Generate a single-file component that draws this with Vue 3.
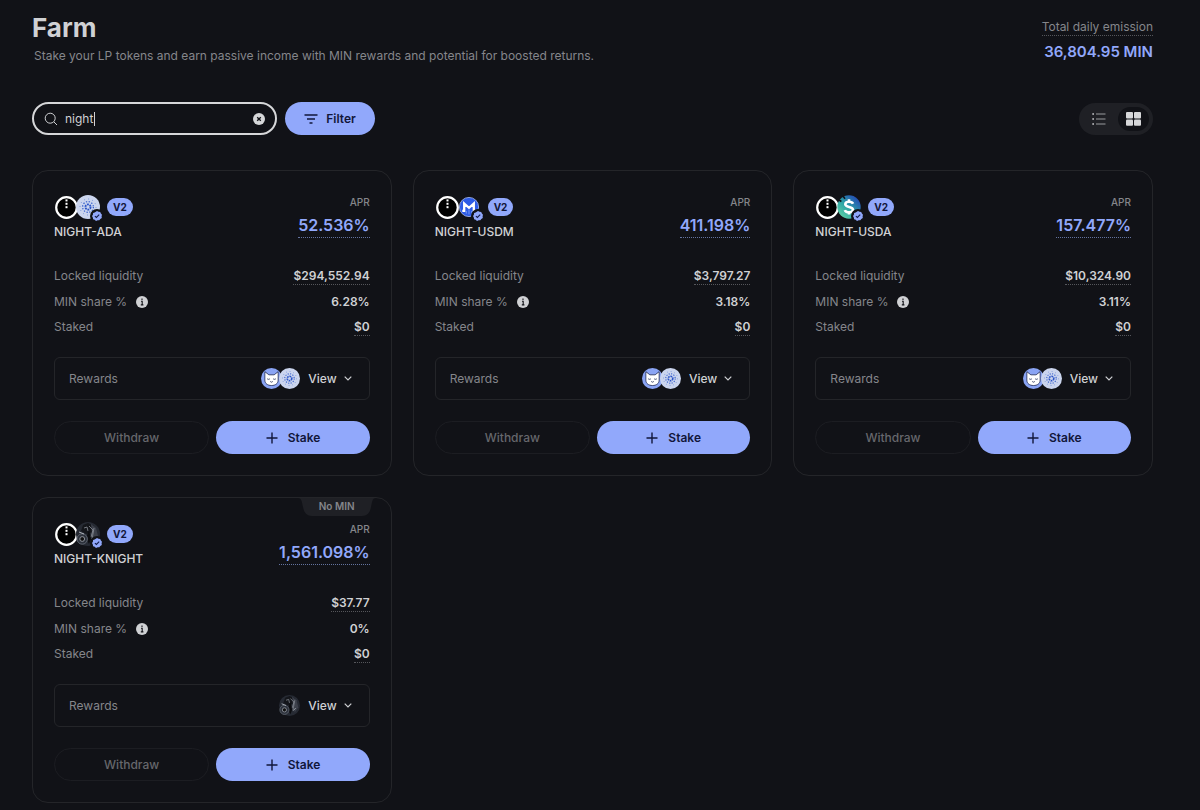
<template>
  <main class="farm-page">
    <!-- Page heading -->
    <header class="page-header">
      <div>
        <h1>Farm</h1>
        <p class="subtitle">
          Stake your LP tokens and earn passive income with MIN rewards and potential for boosted returns.
        </p>
      </div>
      <div class="emission">
        <span class="emission-label">Total daily emission</span>
        <strong>36,804.95 MIN</strong>
      </div>
    </header>

    <!-- Search, filter and view switch -->
    <div class="toolbar">
      <div class="search-box">
        <svg class="search-icon" viewBox="0 0 14 14" aria-hidden="true">
          <circle cx="6.2" cy="6.2" r="5" />
          <path d="M9.9 9.9L13 13" />
        </svg>
        <div class="search-field">
          <input v-model="search" type="text" aria-label="Search farms" />
          <span v-if="search === 'night'" class="caret"></span>
        </div>
        <button class="clear-button" aria-label="Clear search" @click="search = ''">
          <svg viewBox="0 0 12 12">
            <circle cx="6" cy="6" r="6" />
            <path d="M4.2 4.2L7.8 7.8M7.8 4.2L4.2 7.8" />
          </svg>
        </button>
      </div>

      <button class="filter-button">
        <svg viewBox="0 0 14 10" aria-hidden="true">
          <path d="M0.5 1H13.5M3 5H11M5.5 9H8.5" />
        </svg>
        Filter
      </button>

      <div class="view-switch">
        <button :class="{ active: view === 'list' }" aria-label="List view" @click="view = 'list'">
          <svg class="list-icon" viewBox="0 0 14 12">
            <path d="M4 1H13.5M4 6H13.5M4 11H13.5" />
            <path class="dots" d="M0.3 1H2M0.3 6H2M0.3 11H2" />
          </svg>
        </button>
        <button :class="{ active: view === 'grid' }" aria-label="Grid view" @click="view = 'grid'">
          <svg class="grid-icon" viewBox="0 0 15 14">
            <rect x="0" y="0" width="7" height="6.4" rx="1" />
            <rect x="8" y="0" width="7" height="6.4" rx="1" />
            <rect x="0" y="7.4" width="7" height="6.4" rx="1" />
            <rect x="8" y="7.4" width="7" height="6.4" rx="1" />
          </svg>
        </button>
      </div>
    </div>

    <!-- Shared token logos -->
    <svg class="symbols" aria-hidden="true">
      <defs>
        <linearGradient id="usda-fill" x1="0.1" y1="0.9" x2="0.8" y2="0.1">
          <stop offset="0" stop-color="#5fd0a5" />
          <stop offset="0.5" stop-color="#2ba3a6" />
          <stop offset="1" stop-color="#2450b4" />
        </linearGradient>
      </defs>
      <symbol id="token-night" viewBox="0 0 24 24">
        <circle cx="12.5" cy="12.5" r="10.3" fill="#000" stroke="#fff" stroke-width="2.2" />
        <g fill="#fff">
          <rect x="11.5" y="4.4" width="2" height="2" />
          <rect x="11.5" y="7.8" width="2" height="2" />
          <rect x="11.5" y="11.2" width="2" height="2" />
        </g>
      </symbol>
      <symbol id="token-ada" viewBox="0 0 24 24">
        <circle cx="12" cy="12" r="12" fill="#cbd5ee" />
        <circle cx="12" cy="12" r="2.6" fill="none" stroke="#2c55c8" stroke-width="1.9" stroke-dasharray="1.9 0.82" />
        <circle cx="12" cy="12" r="5.4" fill="none" stroke="#3a62cd" stroke-width="1.3" stroke-dasharray="1.3 1.53" />
        <circle cx="12" cy="12" r="8" fill="none" stroke="#5f80d6" stroke-width="0.9" stroke-dasharray="0.9 3.29" />
      </symbol>
      <symbol id="token-usdm" viewBox="0 0 24 24">
        <circle cx="12" cy="12" r="9.6" fill="#2d5be6" stroke="#a9bdf5" stroke-width="0.8" />
        <path d="M5.3 15.8H7.2V8.6L12 12.8L16.8 8.6V15.8H18.9" fill="none" stroke="#fff" stroke-width="2.3" />
        <path d="M12 14.5V19.4M9.3 16V18.6M14.7 16V18.6" stroke="#8ca8f5" stroke-width="0.8" />
      </symbol>
      <symbol id="token-usda" viewBox="0 0 24 24">
        <circle cx="12" cy="12" r="11.7" fill="url(#usda-fill)" />
        <path d="M6 1L8 3.8M2 5L4.4 6.5" stroke="#111217" stroke-width="1.6" />
        <path
          d="M16 8.7C15.4 7.2 13.8 6.7 12 6.7C9.8 6.7 8.3 7.7 8.3 9.3C8.3 12.8 16 11 16 14.7C16 16.4 14.3 17.3 12 17.3C9.8 17.3 8.3 16.6 7.8 15.1M12 4.3V6.8M12 17.2V19.6"
          fill="none"
          stroke="#fff"
          stroke-width="2.6"
        />
      </symbol>
      <symbol id="token-knight" viewBox="0 0 24 24">
        <circle cx="12" cy="12" r="12" fill="#262a33" />
        <path d="M7 3L12 1L18 4L17 10L10 12L5 9Z" fill="#14161b" />
        <path d="M15 2L20 6L22 14L18 20L16 11Z" fill="#3d414b" />
        <path d="M8 6L11 5L12 9M13 4L17 8L15 15M18 6L16 17" fill="none" stroke="#8d929b" stroke-width="0.8" />
        <path d="M13 8L15 17L13 22L10 16Z" fill="#0c0d10" />
        <circle cx="6.2" cy="17" r="5.2" fill="#2c313b" stroke="#5d636e" stroke-width="1" />
        <circle cx="6.2" cy="17" r="2.4" fill="#111" stroke="#989da6" stroke-width="0.9" />
        <path d="M3 10L8 12M16 18L19 15" stroke="#aeb3bb" stroke-width="1" />
      </symbol>
      <symbol id="token-min" viewBox="0 0 24 24">
        <circle cx="12" cy="12" r="12" fill="#8aa4f4" />
        <path
          d="M4.4 4.2L9 7.8H15L19.6 4.2V13.8C19.6 17.8 16.4 20 12 20C7.6 20 4.4 17.8 4.4 13.8Z"
          fill="#fff"
          stroke="#1c2650"
          stroke-width="0.9"
          stroke-linejoin="round"
        />
        <path
          d="M7 12.2C8 13.2 9.3 13.2 10.2 12.2M13.8 12.2C14.8 13.2 16 13.2 17 12.2M10.5 15.4L12 16.2L13.5 15.4"
          fill="none"
          stroke="#1c2650"
          stroke-width="0.9"
        />
      </symbol>
    </svg>

    <!-- Farm cards -->
    <section class="farm-grid">
      <article v-for="farm in filteredFarms" :key="farm.pair" class="farm-card">
        <div v-if="farm.noMin" class="no-min">
          <svg viewBox="0 0 78 18" aria-hidden="true">
            <path d="M0 0H78C74 0 74 5 73 9C72 15 69 18 64 18H14C9 18 6 15 5 9C4 5 4 0 0 0Z" />
          </svg>
          <span>No MIN</span>
        </div>

        <div class="card-header">
          <div>
            <div class="pair-icons">
              <svg class="token"><use href="#token-night" /></svg>
              <div class="second-token">
                <svg class="token"><use :href="'#token-' + farm.token" /></svg>
                <svg class="verified" viewBox="0 0 14 14">
                  <circle cx="7" cy="7" r="7" fill="#111217" />
                  <path
                    d="M7 2L8.5 2.8L10.2 2.9L10.9 4.4L12 5.7L11.6 7.3L11.8 9L10.3 9.9L9.3 11.3L7.7 11.3L6 11.9L4.7 10.8L3.1 10.3L2.8 8.6L2 7.1L2.9 5.7L3.1 4L4.7 3.4Z"
                    fill="#91a8fb"
                  />
                  <path d="M4.9 7.1L6.4 8.5L9.2 5.6" fill="none" stroke="#111a4a" stroke-width="1.1" />
                </svg>
              </div>
              <span class="version">V2</span>
            </div>
            <h2>{{ farm.pair }}</h2>
          </div>
          <div class="apr">
            <span>APR</span>
            <strong>{{ farm.apr }}</strong>
          </div>
        </div>

        <dl class="stats">
          <div>
            <dt>Locked liquidity</dt>
            <dd class="dotted">{{ farm.liquidity }}</dd>
          </div>
          <div class="share-row">
            <dt>
              MIN share %
              <svg class="info-icon" viewBox="0 0 12 12">
                <circle cx="6" cy="6" r="6" />
                <path d="M5 5.3H6.2V8.8M4.8 8.9H7.4M6 2.6V4" />
              </svg>
            </dt>
            <dd>{{ farm.share }}</dd>
          </div>
          <div>
            <dt>Staked</dt>
            <dd class="dotted">{{ farm.staked }}</dd>
          </div>
        </dl>

        <div class="rewards">
          <span>Rewards</span>
          <div class="reward-icons">
            <svg v-for="reward in farm.rewards" :key="reward"><use :href="'#token-' + reward" /></svg>
          </div>
          <button class="view-button">
            View
            <svg viewBox="0 0 8 5" aria-hidden="true"><path d="M0.7 0.7L4 4L7.3 0.7" /></svg>
          </button>
        </div>

        <div class="actions">
          <button class="withdraw-button" disabled>Withdraw</button>
          <button class="stake-button">
            <svg viewBox="0 0 12 12" aria-hidden="true"><path d="M6 0.5V11.5M0.5 6H11.5" /></svg>
            Stake
          </button>
        </div>
      </article>
    </section>
  </main>
</template>

<script setup>
import { computed, ref } from 'vue'

const search = ref('night')
const view = ref('grid')

const farms = [
  {
    pair: 'NIGHT-ADA',
    token: 'ada',
    apr: '52.536%',
    liquidity: '$294,552.94',
    share: '6.28%',
    staked: '$0',
    rewards: ['min', 'ada'],
  },
  {
    pair: 'NIGHT-USDM',
    token: 'usdm',
    apr: '411.198%',
    liquidity: '$3,797.27',
    share: '3.18%',
    staked: '$0',
    rewards: ['min', 'ada'],
  },
  {
    pair: 'NIGHT-USDA',
    token: 'usda',
    apr: '157.477%',
    liquidity: '$10,324.90',
    share: '3.11%',
    staked: '$0',
    rewards: ['min', 'ada'],
  },
  {
    pair: 'NIGHT-KNIGHT',
    token: 'knight',
    apr: '1,561.098%',
    liquidity: '$37.77',
    share: '0%',
    staked: '$0',
    rewards: ['knight'],
    noMin: true,
  },
]

// Match the search text against the pair name
const filteredFarms = computed(() =>
  farms.filter((farm) => farm.pair.toLowerCase().includes(search.value.trim().toLowerCase())),
)
</script>

<style>
body {
  margin: 0;
  background: #111217;
}
</style>

<style scoped>
.farm-page {
  min-height: 100vh;
  box-sizing: border-box;
  padding: 10px 47px 6px 32px;
  background: #111217;
  color: #d0d1d4;
  font-family: Inter, 'Liberation Sans', sans-serif;
  font-size: 12px;
  line-height: 20px;
}

button,
input {
  font: inherit;
  color: inherit;
  border: none;
  background: none;
  padding: 0;
}

button {
  cursor: pointer;
}

h1,
h2,
p,
dl,
dd {
  margin: 0;
}

/* Page heading */
.page-header {
  display: flex;
  justify-content: space-between;
}

h1 {
  font-size: 26px;
  line-height: 36px;
  font-weight: 700;
}

.subtitle {
  padding-left: 2px;
  color: #85868b;
}

.emission {
  display: flex;
  flex-direction: column;
  align-items: flex-end;
  padding-top: 8px;
}

.emission-label {
  line-height: 17px;
  color: #85868b;
  border-bottom: 1px dotted #55565b;
}

.emission strong {
  margin-top: 4px;
  font-size: 15px;
  line-height: 24px;
  font-weight: 600;
  color: #91a8fb;
}

/* Toolbar */
.toolbar {
  display: flex;
  align-items: center;
  gap: 8px;
  margin: 36px 0 35px;
}

.search-box {
  display: flex;
  align-items: center;
  width: 245px;
  height: 33px;
  box-sizing: border-box;
  padding: 0 10px;
  border: 2px solid #d6d7d9;
  border-radius: 17px;
}

.search-icon {
  width: 14px;
  height: 14px;
  fill: none;
  stroke: #d0d1d4;
}

.search-field {
  position: relative;
  flex: 1;
  margin-left: 7px;
}

.search-field input {
  display: block;
  width: 100%;
  height: 20px;
  outline: none;
  caret-color: transparent;
}

.caret {
  position: absolute;
  left: 29px;
  top: 3px;
  width: 1px;
  height: 14px;
  background: #d0d1d4;
}

.clear-button {
  display: flex;
}

.clear-button svg {
  width: 12px;
  height: 12px;
  fill: #d6d7d9;
  stroke: none;
}

.clear-button path {
  stroke: #111217;
  stroke-width: 1.3;
}

.filter-button {
  display: flex;
  align-items: center;
  justify-content: center;
  gap: 8px;
  width: 90px;
  height: 33px;
  border-radius: 17px;
  background: #91a8fb;
  color: #11163a;
  font-weight: 600;
}

.filter-button svg {
  width: 14px;
  height: 10px;
  stroke: #11163a;
  stroke-width: 1.4;
}

.view-switch {
  display: flex;
  gap: 4px;
  margin-left: auto;
  padding: 4px;
  border-radius: 16px;
  background: #1f2025;
}

.view-switch button {
  display: flex;
  align-items: center;
  justify-content: center;
  width: 31px;
  height: 24px;
  border-radius: 12px;
}

.view-switch .active {
  background: #111217;
}

.list-icon {
  width: 14px;
  height: 12px;
  stroke: #9a9b9f;
}

.list-icon .dots {
  stroke-width: 2;
}

.grid-icon {
  width: 15px;
  height: 14px;
  fill: #d6d7d9;
}

.symbols {
  position: absolute;
  width: 0;
  height: 0;
}

/* Cards */
.farm-grid {
  display: grid;
  grid-template-columns: repeat(3, minmax(0, 1fr));
  gap: 21px;
}

.farm-card {
  position: relative;
  padding: 23px 21px 21px;
  border: 1px solid #242529;
  border-radius: 16px;
}

.no-min {
  position: absolute;
  top: 0;
  right: 15px;
  width: 78px;
  height: 18px;
  text-align: center;
  font-size: 10px;
  line-height: 16px;
  font-weight: 600;
  color: #85868b;
}

.no-min svg {
  position: absolute;
  inset: 0;
  width: 78px;
  height: 18px;
  fill: #1f2025;
}

.no-min span {
  position: relative;
}

.card-header {
  display: flex;
  justify-content: space-between;
}

.pair-icons {
  display: flex;
  align-items: center;
  height: 26px;
}

.token {
  display: block;
  width: 24px;
  height: 24px;
}

.second-token {
  position: relative;
  margin-left: -2px;
}

.verified {
  position: absolute;
  right: -4px;
  bottom: -4px;
  width: 14px;
  height: 14px;
}

.version {
  margin-left: 7px;
  padding: 0 6px;
  border-radius: 9px;
  background: #91a8fb;
  color: #11163a;
  font-size: 10px;
  line-height: 18px;
  font-weight: 700;
}

h2 {
  margin-top: 2px;
  font-size: 12px;
  line-height: 20px;
  font-weight: 500;
}

.apr {
  display: flex;
  flex-direction: column;
  align-items: flex-end;
}

.apr span {
  font-size: 10px;
  line-height: 16px;
  font-weight: 500;
  color: #85868b;
}

.apr strong {
  margin-top: 3px;
  font-size: 16px;
  line-height: 24px;
  font-weight: 600;
  color: #91a8fb;
  border-bottom: 1px dotted #64739f;
}

.stats {
  display: flex;
  flex-direction: column;
  gap: 5px;
  margin-top: 24px;
}

.stats div {
  display: flex;
  align-items: center;
  justify-content: space-between;
  height: 20px;
}

.stats .share-row {
  height: 21px;
}

.stats dt {
  display: flex;
  align-items: center;
  gap: 9px;
  color: #85868b;
}

.stats dd {
  line-height: 16px;
  font-weight: 600;
}

.stats .dotted {
  border-bottom: 1px dotted #55565b;
}

.info-icon {
  width: 12px;
  height: 12px;
  fill: #d0d1d4;
}

.info-icon path {
  fill: none;
  stroke: #111217;
  stroke-width: 1.1;
}

.rewards {
  display: flex;
  align-items: center;
  height: 43px;
  box-sizing: border-box;
  margin-top: 20px;
  padding: 0 17px 0 14px;
  border: 1px solid #242529;
  border-radius: 6px;
  color: #85868b;
}

.reward-icons {
  display: flex;
  margin-left: auto;
}

.reward-icons svg {
  width: 21px;
  height: 21px;
}

.reward-icons svg + svg {
  margin-left: -3px;
}

.view-button {
  display: flex;
  align-items: center;
  gap: 7px;
  margin-left: 8px;
  color: #d0d1d4;
  font-weight: 500;
}

.view-button svg {
  width: 8px;
  height: 5px;
  fill: none;
  stroke: #d0d1d4;
  stroke-width: 1.2;
}

.actions {
  display: flex;
  gap: 7px;
  margin-top: 21px;
}

.actions button {
  flex: 1;
  height: 33px;
  box-sizing: border-box;
  border-radius: 17px;
  font-weight: 600;
}

.actions .withdraw-button {
  border: 1px solid #1c1d22;
  color: #66676c;
  font-weight: 500;
  cursor: default;
}

.actions .stake-button {
  display: flex;
  align-items: center;
  justify-content: center;
  gap: 10px;
  background: #91a8fb;
  color: #11163a;
}

.stake-button svg {
  width: 12px;
  height: 12px;
  stroke: #11163a;
  stroke-width: 1.4;
}
</style>
